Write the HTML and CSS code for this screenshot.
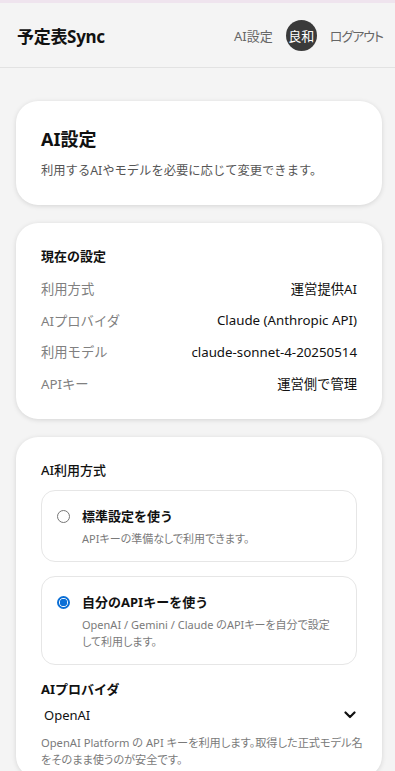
FILE: index.html
```html
<!DOCTYPE html>
<html lang="ja">
<head>
<meta charset="utf-8">
<title>AI設定 - 予定表Sync</title>
<link rel="stylesheet" href="styles.css">
</head>
<body>
<div class="topstrip"></div>
<header class="header">
  <div class="brand">予定表Sync</div>
  <nav class="nav">
    <a class="nav-link">AI設定</a>
    <span class="avatar">良和</span>
    <a class="nav-link logout">ログアウト</a>
  </nav>
</header>
<main class="main">
  <section class="card intro">
    <h1 class="page-title">AI設定</h1>
    <p class="page-sub">利用するAIやモデルを必要に応じて変更できます。</p>
  </section>

  <section class="card current">
    <h2 class="section-title">現在の設定</h2>
    <div class="row"><span class="label">利用方式</span><span class="value">運営提供AI</span></div>
    <div class="row"><span class="label">AIプロバイダ</span><span class="value">Claude (Anthropic API)</span></div>
    <div class="row"><span class="label">利用モデル</span><span class="value">claude-sonnet-4-20250514</span></div>
    <div class="row"><span class="label">APIキー</span><span class="value">運営側で管理</span></div>
  </section>

  <section class="card form">
    <h2 class="field-title">AI利用方式</h2>
    <label class="option">
      <span class="radio"></span>
      <span class="option-body">
        <span class="option-title">標準設定を使う</span>
        <span class="option-desc">APIキーの準備なしで利用できます。</span>
      </span>
    </label>
    <label class="option">
      <span class="radio checked"></span>
      <span class="option-body">
        <span class="option-title">自分のAPIキーを使う</span>
        <span class="option-desc">OpenAI / Gemini / Claude のAPIキーを自分で設定<br>して利用します。</span>
      </span>
    </label>
    <h2 class="field-title provider">AIプロバイダ</h2>
    <div class="select">
      <span>OpenAI</span>
      <svg class="chev" width="12" height="8" viewBox="0 0 12 8"><path d="M1.5 1.5 L6 6 L10.5 1.5" fill="none" stroke="#111" stroke-width="2.2" stroke-linecap="round" stroke-linejoin="round"/></svg>
    </div>
    <p class="help">OpenAI Platform の API キーを利用します。取得した正式モデル名<br>をそのまま使うのが安全です。</p>
  </section>
</main>
</body>
</html>
```

FILE: styles.css
```css
* { box-sizing: border-box; }
html, body {
  margin: 0;
  padding: 0;
  background: #f4f4f4;
  font-family: "Noto Sans", "Noto Sans CJK JP", sans-serif;
  color: #111;
}
.topstrip {
  height: 3px;
  background: #efe4ee;
}
.header {
  height: 65px;
  display: flex;
  align-items: center;
  justify-content: space-between;
  padding: 0 12px 0 17px;
  border-bottom: 1px solid #e2e2e2;
  background: #f4f4f4;
}
.brand {
  font-size: 17px;
  font-weight: 700;
  letter-spacing: -0.3px;
}
.nav {
  display: flex;
  align-items: center;
  gap: 13px;
}
.nav-link {
  font-size: 13px;
  color: #666;
  font-feature-settings: "palt";
}
.logout { letter-spacing: -1px; }
.avatar {
  width: 31px;
  height: 31px;
  border-radius: 50%;
  background: #3a3a3a;
  color: #fff;
  font-size: 13px;
  display: flex;
  align-items: center;
  justify-content: center;
}
.main {
  padding: 33px 13px 20px 16px;
  display: flex;
  flex-direction: column;
  gap: 18px;
}
.card {
  background: #fff;
  border-radius: 22px;
  box-shadow: 0 1px 5px rgba(0,0,0,0.13);
  padding: 23px 25px 24px;
}
.intro { padding-top: 25px; }
.current { padding-bottom: 20px; }
.page-title {
  margin: 0;
  font-size: 18px;
  font-weight: 700;
  line-height: 26px;
}
.page-sub {
  margin: 9px 0 0;
  font-size: 12.3px;
  color: #555;
  line-height: 20px;
}
.section-title {
  margin: 0 0 7px;
  font-size: 13px;
  font-weight: 700;
  line-height: 20px;
}
.row {
  display: flex;
  justify-content: space-between;
  align-items: center;
  height: 31.6px;
  font-size: 13.3px;
}
.label { color: #808080; }
.value { color: #111; }
.form { padding-bottom: 10px; }
.field-title {
  margin: 0 0 10px;
  font-size: 13px;
  font-weight: 500;
  line-height: 20px;
}
.option {
  display: flex;
  align-items: flex-start;
  gap: 12px;
  border: 1px solid #e6e6e6;
  border-radius: 14px;
  padding: 15px 15px 14px 15px;
  margin-bottom: 14px;
}
.radio {
  flex: none;
  width: 13px;
  height: 13px;
  margin-top: 4px;
  border: 1px solid #767676;
  border-radius: 50%;
}
.radio.checked {
  border: 2px solid #0b6fd6;
  background: radial-gradient(circle, #0b6fd6 0 3.5px, #fff 4px);
}
.option-body {
  display: flex;
  flex-direction: column;
}
.option-title {
  font-size: 13px;
  font-weight: 700;
  line-height: 20px;
}
.option-desc {
  margin-top: 4px;
  font-size: 11px;
  color: #7a7a7a;
  line-height: 17px;
  font-feature-settings: "palt";
}
.provider { margin-top: 3px; margin-bottom: 6px; font-weight: 700; }
.select {
  display: flex;
  justify-content: space-between;
  align-items: center;
  padding: 0 1px 0 3px;
  height: 20px;
  font-size: 13px;
}
.help {
  margin: 9px 0 0;
  font-size: 11.2px;
  color: #7a7a7a;
  line-height: 17px;
  font-feature-settings: "palt";
  white-space: nowrap;
}
```
